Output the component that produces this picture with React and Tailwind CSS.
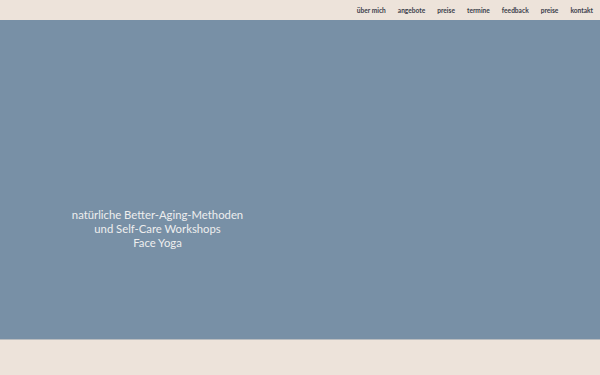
import React from 'react';

const links = ['über mich', 'angebote', 'preise', 'termine', 'feedback', 'preise', 'kontakt'];

const App = () => {
  return (
    <div className="w-[600px] h-[375px] overflow-hidden bg-[#ede3da]" style={{ fontFamily: '"Source Sans Pro", Lato, "Open Sans", sans-serif' }}>
      <header className="h-[20px] flex items-center justify-end pr-[7px] gap-[12px]">
        {links.map((l, i) => (
          <span key={i} className="text-[6.6px] font-bold text-[#3b404a] leading-none cursor-pointer">{l}</span>
        ))}
      </header>
      <section className="h-[320px] bg-[#7890a6] border-b border-[#b9bcbf] pt-[188px]">
        <div className="w-[315px] text-center text-[11.3px] leading-[14px] text-[#eeeeee]">
          <p>natürliche Better-Aging-Methoden</p>
          <p>und Self-Care Workshops</p>
          <p>Face Yoga</p>
        </div>
      </section>
    </div>
  );
};

export default App;
